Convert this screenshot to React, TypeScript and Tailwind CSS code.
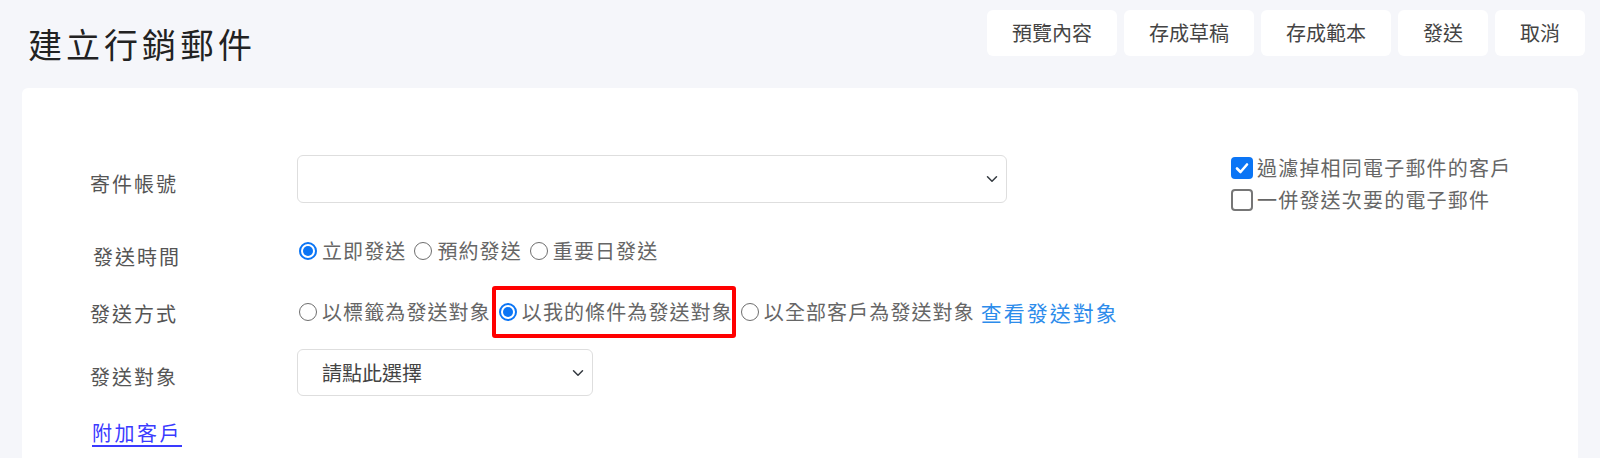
import React from "react";

const font = { fontFamily: '"Noto Sans CJK TC", "Noto Sans", sans-serif' };

const Chevron = () => (
  <svg width="16" height="12" viewBox="0 0 16 16" className="absolute right-[6px] top-1/2 -translate-y-1/2">
    <path d="m2 5 6 6 6-6" fill="none" stroke="#343a40" strokeWidth="2" strokeLinecap="round" strokeLinejoin="round" />
  </svg>
);

const Radio = (props: { label: string; checked?: boolean; boxed?: boolean }) => (
  <span className="relative flex h-[28px] shrink-0 items-center whitespace-nowrap">
    {props.checked ? (
      <span className="ml-[2px] flex h-[18px] w-[18px] shrink-0 items-center justify-center rounded-full border-2 border-[#0b75f5] bg-white">
        <span className="h-[10px] w-[10px] rounded-full bg-[#0b75f5]" />
      </span>
    ) : (
      <span className="ml-[2px] h-[18px] w-[18px] shrink-0 rounded-full border-[1.5px] border-[#6e6e6e] bg-white" />
    )}
    <span className="ml-[5px] text-[20px] leading-[28px] tracking-[1.1px] text-[#666]">{props.label}</span>
    {props.boxed && (
      <span className="pointer-events-none absolute -top-[12px] -bottom-[12px] -left-[5px] -right-[3px] rounded-[3px] border-4 border-[#ff0000]" />
    )}
  </span>
);

const Check = (props: { label: string; checked?: boolean }) => (
  <div className="flex h-[32px] items-center whitespace-nowrap">
    {props.checked ? (
      <span className="flex h-[22px] w-[22px] shrink-0 items-center justify-center rounded-[4px] bg-[#0b75f5]">
        <svg width="16" height="16" viewBox="0 0 16 16">
          <path d="M3 8.5 6.5 12 13 4.5" fill="none" stroke="#fff" strokeWidth="2.6" strokeLinecap="round" strokeLinejoin="round" />
        </svg>
      </span>
    ) : (
      <span className="h-[22px] w-[22px] shrink-0 rounded-[4px] border-2 border-[#767676] bg-white" />
    )}
    <span className="ml-[4px] text-[20px] tracking-[1.2px] text-[#666]">{props.label}</span>
  </div>
);

const Label = (props: { text: string; className?: string }) => (
  <div className={"w-[207px] shrink-0 whitespace-nowrap text-[20px] tracking-[2px] text-[#555] " + (props.className ?? "")}>
    {props.text}
  </div>
);

const buttons = ["預覽內容", "存成草稿", "存成範本", "發送", "取消"];

export default function App() {
  return (
    <div className="h-[458px] w-full overflow-hidden bg-[#f5f6fa]" style={font}>
      <div className="flex h-[56px] items-start justify-between pl-[28px] pr-[15px] pt-[10px]">
        <h1 className="mt-[17px] whitespace-nowrap text-[34px] leading-[34px] tracking-[4px] text-[#222]">建立行銷郵件</h1>
        <div className="flex gap-[7px]">
          {buttons.map((b) => (
            <button key={b} className="h-[46px] whitespace-nowrap rounded-[6px] bg-white px-[25px] text-[20px] text-[#444]">
              {b}
            </button>
          ))}
        </div>
      </div>

      <div className="mx-[22px] mt-[32px] flex rounded-[6px] bg-white pb-[40px] pl-[68px] pt-[67px]">
        <div className="flex w-[917px] shrink-0 flex-col">
          <div className="flex h-[48px] items-center">
            <Label text="寄件帳號" className="pt-[10px]" />
            <div className="relative h-[48px] w-[710px] shrink-0 rounded-[6px] border border-[#dedede] bg-white">
              <Chevron />
            </div>
          </div>

          <div className="mt-[28px] flex h-[40px] items-center">
            <Label text="發送時間" className="pl-[3px] pt-[12px]" />
            <div className="flex items-center gap-[6px]">
              <Radio label="立即發送" checked />
              <Radio label="預約發送" />
              <Radio label="重要日發送" />
            </div>
          </div>

          <div className="mt-[21px] flex h-[40px] items-center">
            <Label text="發送方式" className="pt-[4px]" />
            <div className="flex shrink-0 items-center gap-[6px]">
              <Radio label="以標籤為發送對象" />
              <Radio label="以我的條件為發送對象" checked boxed />
              <Radio label="以全部客戶為發送對象" />
              <a href="#" className="shrink-0 whitespace-nowrap text-[21px] leading-[28px] tracking-[2px] text-[#2d8ceb]">
                查看發送對象
              </a>
            </div>
          </div>

          <div className="mt-[17px] flex h-[47px] items-center">
            <Label text="發送對象" className="pt-[9px]" />
            <div className="relative flex h-[47px] w-[296px] shrink-0 items-center whitespace-nowrap rounded-[6px] border border-[#dedede] bg-white pl-[24px] text-[20px] text-[#444]">
              請點此選擇
              <Chevron />
            </div>
          </div>

          <div className="mt-[22px] flex h-[30px] items-center">
            <a href="#" className="whitespace-nowrap pl-[2px] text-[20px] leading-[30px] tracking-[2.5px] text-[#3a3aff] underline underline-offset-[4px]">
              附加客戶
            </a>
          </div>
        </div>

        <div className="ml-[224px] -mt-[3px] flex shrink-0 flex-col">
          <Check label="過濾掉相同電子郵件的客戶" checked />
          <Check label="一併發送次要的電子郵件" />
        </div>
      </div>
    </div>
  );
}
